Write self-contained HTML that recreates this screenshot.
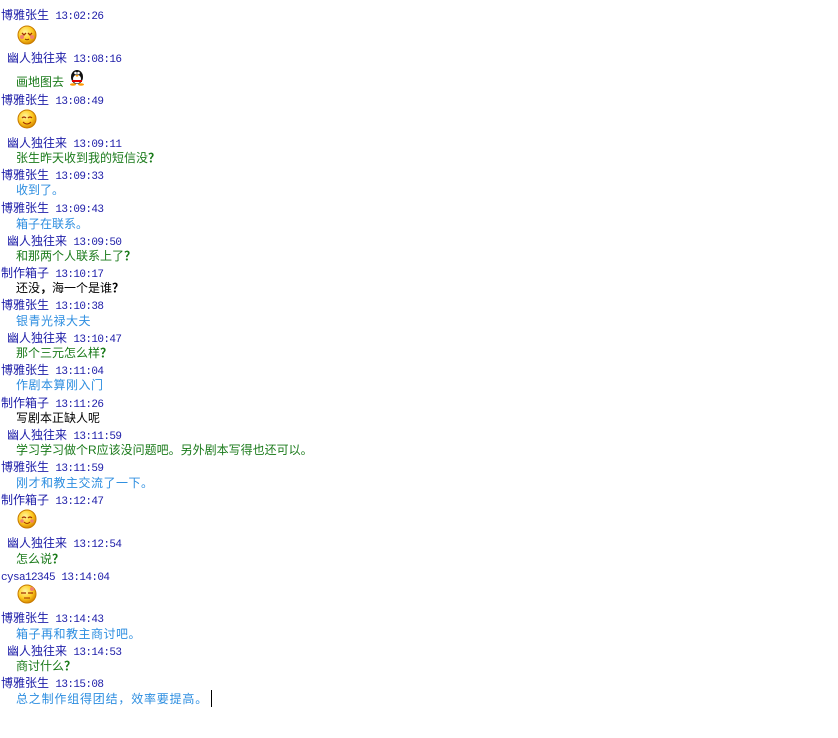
<!DOCTYPE html>
<html><head><meta charset="utf-8"><style>
body{margin:0;background:#fff;width:838px;height:738px;position:relative;overflow:hidden;font-family:"Liberation Sans","Noto Sans CJK SC",sans-serif;font-size:12px}
.l{position:absolute;white-space:nowrap;line-height:14px}
.h{color:#1c1ca8}
.h span{font-family:"Liberation Mono",monospace;font-size:11px;letter-spacing:-0.6px;margin-left:3px}
.h span.m{margin-left:0}
.b,.g,.k{font-size:12px;left:16px}
.b{color:#2d8ee0}
.g{color:#1a7a1a}
.k{color:#000}
.e{position:absolute;left:17px;width:20px;height:20px}
</style></head><body>
<svg width="0" height="0" style="position:absolute"><defs>
<radialGradient id="sg" cx="40%" cy="35%" r="65%"><stop offset="0" stop-color="#fff6a0"/><stop offset=".6" stop-color="#ffcc22"/><stop offset="1" stop-color="#d88a00"/></radialGradient></defs></svg>

<div class="l h" style="left:1px;top:8px">博雅张生 <span>13:02:26</span></div>
<svg class="e" style="top:25px" viewBox="0 0 20 20"><circle cx="10" cy="10" r="9" fill="url(#sg)" stroke="#c77a00"/><path d="M5 8l2 2 2-2M11 8l2 2 2-2" stroke="#a03000" fill="none" stroke-width="1.3"/><circle cx="5" cy="12" r="2" fill="#f08070"/><circle cx="15" cy="12" r="2" fill="#f08070"/><path d="M8 14q2 1.5 4 0" stroke="#803000" fill="none"/></svg>
<div class="l h" style="left:7px;top:51px">幽人独往来 <span>13:08:16</span></div>
<div class="l g" style="top:75px">画地图去</div>
<svg style="position:absolute;left:66px;top:66px" width="20" height="20" viewBox="0 0 20 20"><ellipse cx="11" cy="11" rx="6" ry="7" fill="#111"/><ellipse cx="11" cy="13" rx="4" ry="4.5" fill="#fff"/><circle cx="9.5" cy="7" r="1.3" fill="#fff"/><circle cx="12.5" cy="7" r="1.3" fill="#fff"/><path d="M9 9h4l-2 2z" fill="#f90"/><path d="M6 14h10v2H6z" fill="#d00"/><ellipse cx="7" cy="18.5" rx="3" ry="1.3" fill="#f90"/><ellipse cx="15" cy="18.5" rx="3" ry="1.3" fill="#f90"/></svg>
<div class="l h" style="left:1px;top:93px">博雅张生 <span>13:08:49</span></div>
<svg class="e" style="top:109px" viewBox="0 0 20 20"><circle cx="10" cy="10" r="9" fill="url(#sg)" stroke="#c77a00"/><path d="M5 9q2-2 4 0M11 9q2-2 4 0" stroke="#a03000" fill="none" stroke-width="1.2"/><path d="M6 13q4 4 8 0" stroke="#a03000" fill="none"/></svg>
<div class="l h" style="left:7px;top:136px">幽人独往来 <span>13:09:11</span></div>
<div class="l g" style="top:151px">张生昨天收到我的短信没<b>？</b></div>
<div class="l h" style="left:1px;top:168px">博雅张生 <span>13:09:33</span></div>
<div class="l b" style="top:183px">收到了。</div>
<div class="l h" style="left:1px;top:201px">博雅张生 <span>13:09:43</span></div>
<div class="l b" style="top:217px">箱子在联系。</div>
<div class="l h" style="left:7px;top:234px">幽人独往来 <span>13:09:50</span></div>
<div class="l g" style="top:249px">和那两个人联系上了<b>？</b></div>
<div class="l h" style="left:1px;top:266px">制作箱子 <span>13:10:17</span></div>
<div class="l k" style="top:281px">还没<b>，</b>海一个是谁<b>？</b></div>
<div class="l h" style="left:1px;top:298px">博雅张生 <span>13:10:38</span></div>
<div class="l b" style="top:314px;letter-spacing:0.5px">银青光禄大夫</div>
<div class="l h" style="left:7px;top:331px">幽人独往来 <span>13:10:47</span></div>
<div class="l g" style="top:346px">那个三元怎么样<b>？</b></div>
<div class="l h" style="left:1px;top:363px">博雅张生 <span>13:11:04</span></div>
<div class="l b" style="top:378px;letter-spacing:0.5px">作剧本算刚入门</div>
<div class="l h" style="left:1px;top:396px">制作箱子 <span>13:11:26</span></div>
<div class="l k" style="top:411px">写剧本正缺人呢</div>
<div class="l h" style="left:7px;top:428px">幽人独往来 <span>13:11:59</span></div>
<div class="l g" style="top:443px">学习学习做个R应该没问题吧。另外剧本写得也还可以。</div>
<div class="l h" style="left:1px;top:460px">博雅张生 <span>13:11:59</span></div>
<div class="l b" style="top:476px;letter-spacing:0.5px">刚才和教主交流了一下。</div>
<div class="l h" style="left:1px;top:493px">制作箱子 <span>13:12:47</span></div>
<svg class="e" style="top:509px" viewBox="0 0 20 20"><circle cx="10" cy="10" r="9" fill="url(#sg)" stroke="#c77a00"/><path d="M5 9q2-2 4 0M11 9q2-2 4 0" stroke="#a03000" fill="none" stroke-width="1.2"/><circle cx="5" cy="12" r="1.8" fill="#f08070"/><circle cx="15" cy="12" r="1.8" fill="#f08070"/><path d="M7 13q3 3 6 0" stroke="#a03000" fill="none"/></svg>
<div class="l h" style="left:7px;top:536px">幽人独往来 <span>13:12:54</span></div>
<div class="l g" style="top:552px">怎么说<b>？</b></div>
<div class="l h" style="left:1px;top:569px"><span class="m">cysa12345</span> <span>13:14:04</span></div>
<svg class="e" style="top:584px" viewBox="0 0 20 20"><circle cx="10" cy="10" r="9" fill="url(#sg)" stroke="#c77a00"/><path d="M4 9h5M11 9h5" stroke="#a03000" stroke-width="1.2"/><path d="M7 14h6" stroke="#a03000"/><circle cx="15" cy="5" r="2" fill="#f08070"/></svg>
<div class="l h" style="left:1px;top:611px">博雅张生 <span>13:14:43</span></div>
<div class="l b" style="top:627px;letter-spacing:0.5px">箱子再和教主商讨吧。</div>
<div class="l h" style="left:7px;top:644px">幽人独往来 <span>13:14:53</span></div>
<div class="l g" style="top:659px">商讨什么<b>？</b></div>
<div class="l h" style="left:1px;top:676px">博雅张生 <span>13:15:08</span></div>
<div class="l b" style="top:692px;letter-spacing:0.8px">总之制作组得团结，效率要提高。</div>
<div style="position:absolute;left:211px;top:690px;width:1px;height:17px;background:#000"></div>
</body></html>
